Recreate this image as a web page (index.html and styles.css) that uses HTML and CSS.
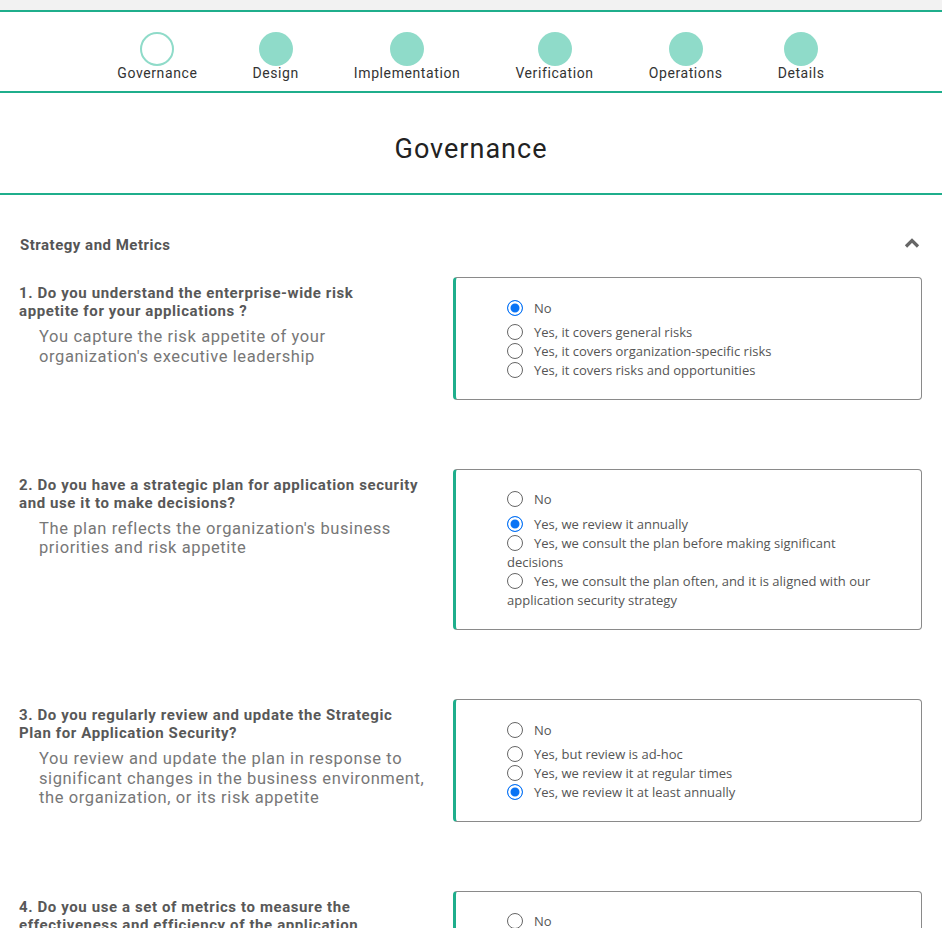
FILE: index.html
```html
<!DOCTYPE html>
<html lang="en">
<head>
<meta charset="utf-8">
<title>Governance</title>
<link rel="stylesheet" href="styles.css">
</head>
<body>
<div class="topbar"></div>
<nav class="stepper">
  <div class="step current"><span class="dot"></span><span class="step-label">Governance</span></div>
  <div class="step"><span class="dot"></span><span class="step-label">Design</span></div>
  <div class="step"><span class="dot"></span><span class="step-label">Implementation</span></div>
  <div class="step"><span class="dot"></span><span class="step-label">Verification</span></div>
  <div class="step"><span class="dot"></span><span class="step-label">Operations</span></div>
  <div class="step"><span class="dot"></span><span class="step-label">Details</span></div>
</nav>
<header class="page-title">
  <h1>Governance</h1>
</header>
<main class="section">
  <div class="section-head">
    <h2>Strategy and Metrics</h2>
    <svg class="chevron" width="16" height="10" viewBox="0 0 16 10"><polyline points="2,8.5 8,2.5 14,8.5" fill="none" stroke="#666" stroke-width="3.2"/></svg>
  </div>

  <div class="question">
    <div class="q-text">
      <p class="q-title">1. Do you understand the enterprise-wide risk<br>appetite for your applications ?</p>
      <p class="q-desc">You capture the risk appetite of your<br>organization's executive leadership</p>
    </div>
    <div class="answers">
      <div class="opt first"><input type="radio" name="q1" checked><span>No</span></div>
      <div class="opt"><input type="radio" name="q1"><span>Yes, it covers general risks</span></div>
      <div class="opt"><input type="radio" name="q1"><span>Yes, it covers organization-specific risks</span></div>
      <div class="opt"><input type="radio" name="q1"><span>Yes, it covers risks and opportunities</span></div>
    </div>
  </div>

  <div class="question">
    <div class="q-text">
      <p class="q-title">2. Do you have a strategic plan for application security<br>and use it to make decisions?</p>
      <p class="q-desc">The plan reflects the organization's business<br>priorities and risk appetite</p>
    </div>
    <div class="answers">
      <div class="opt first"><input type="radio" name="q2"><span>No</span></div>
      <div class="opt"><input type="radio" name="q2" checked><span>Yes, we review it annually</span></div>
      <div class="opt"><input type="radio" name="q2"><span>Yes, we consult the plan before making significant<br>decisions</span></div>
      <div class="opt"><input type="radio" name="q2"><span>Yes, we consult the plan often, and it is aligned with our<br>application security strategy</span></div>
    </div>
  </div>

  <div class="question">
    <div class="q-text">
      <p class="q-title">3. Do you regularly review and update the Strategic<br>Plan for Application Security?</p>
      <p class="q-desc">You review and update the plan in response to<br>significant changes in the business environment,<br>the organization, or its risk appetite</p>
    </div>
    <div class="answers">
      <div class="opt first"><input type="radio" name="q3"><span>No</span></div>
      <div class="opt"><input type="radio" name="q3"><span>Yes, but review is ad-hoc</span></div>
      <div class="opt"><input type="radio" name="q3"><span>Yes, we review it at regular times</span></div>
      <div class="opt"><input type="radio" name="q3" checked><span>Yes, we review it at least annually</span></div>
    </div>
  </div>

  <div class="question">
    <div class="q-text">
      <p class="q-title">4. Do you use a set of metrics to measure the<br>effectiveness and efficiency of the application<br>security program across applications?</p>
      <p class="q-desc">You have defined metrics with definitions,<br>including the purpose and collection method</p>
    </div>
    <div class="answers">
      <div class="opt first"><input type="radio" name="q4"><span>No</span></div>
      <div class="opt"><input type="radio" name="q4"><span>Yes, for one metrics category</span></div>
      <div class="opt"><input type="radio" name="q4"><span>Yes, for two metrics categories</span></div>
      <div class="opt"><input type="radio" name="q4"><span>Yes, for all three categories</span></div>
    </div>
  </div>
</main>
</body>
</html>
```
FILE: styles.css
```css
* { box-sizing: border-box; }
html, body { margin: 0; padding: 0; background: #fff; }
body { font-family: "Roboto", "Noto Sans", sans-serif; color: #333; }

.topbar { height: 10px; background: #f2f2f2; }

.stepper {
  border-top: 2px solid #1fae8c;
  border-bottom: 2px solid #1fae8c;
  height: 83px;
  display: flex;
  justify-content: center;
  gap: 55px;
  padding-top: 20px;
}
.step {
  display: flex;
  flex-direction: column;
  align-items: center;
}
.dot {
  width: 34px;
  height: 34px;
  border-radius: 50%;
  background: #8fdbc9;
}
.step.current .dot { background: #fff; border: 2px solid #8fdbc9; }
.step-label {
  font-size: 14px;
  line-height: 16px;
  letter-spacing: 0.6px;
  color: #333;
  margin-top: -1px;
}

.page-title {
  height: 102px;
  border-bottom: 2px solid #1fae8c;
  display: flex;
  align-items: center;
  justify-content: center;
}
.page-title h1 {
  margin: 0;
  font-size: 27px;
  font-weight: 400;
  letter-spacing: 1px;
  color: #222;
  padding-top: 11px;
}

.section { padding: 39px 20px 0 19px; }
.section-head {
  display: flex;
  justify-content: space-between;
  align-items: center;
  height: 22px;
  margin-bottom: 21px;
}
.section-head h2 {
  margin: 0 0 0 1px;
  font-size: 15px;
  font-weight: 700;
  letter-spacing: 0.5px;
  color: #555;
}
.chevron { margin-right: 2px; margin-top: -5px; }

.question {
  display: grid;
  grid-template-columns: 434px 469px;
  margin-bottom: 69px;
}
.q-text { padding-top: 7px; }
.q-title {
  margin: 0;
  font-size: 15px;
  font-weight: 700;
  line-height: 18px;
  letter-spacing: 0.6px;
  color: #585858;
}
.q-desc {
  margin: 7px 0 0 20px;
  font-size: 16.5px;
  line-height: 19.5px;
  letter-spacing: 0.6px;
  color: #777;
}

.answers {
  border: 1px solid #8a8a8a;
  border-left: 3px solid #1fae8c;
  border-radius: 4px;
  padding: 20.5px 20px 18.5px 51px;
  font-family: "Open Sans", "Noto Sans", sans-serif;
  font-size: 13px;
  color: #555;
}
.opt { line-height: 19.2px; }
.opt.first { margin-bottom: 5px; }
.opt input {
  -webkit-appearance: none;
  appearance: none;
  width: 16px;
  height: 16px;
  margin: 0 11px 0 0;
  border: 1px solid #666;
  border-radius: 50%;
  background: #fff;
  vertical-align: -3px;
}
.opt input:checked {
  border: 1.5px solid #0a74f5;
  background: #0a74f5;
  box-shadow: inset 0 0 0 2.5px #fff;
}
```
